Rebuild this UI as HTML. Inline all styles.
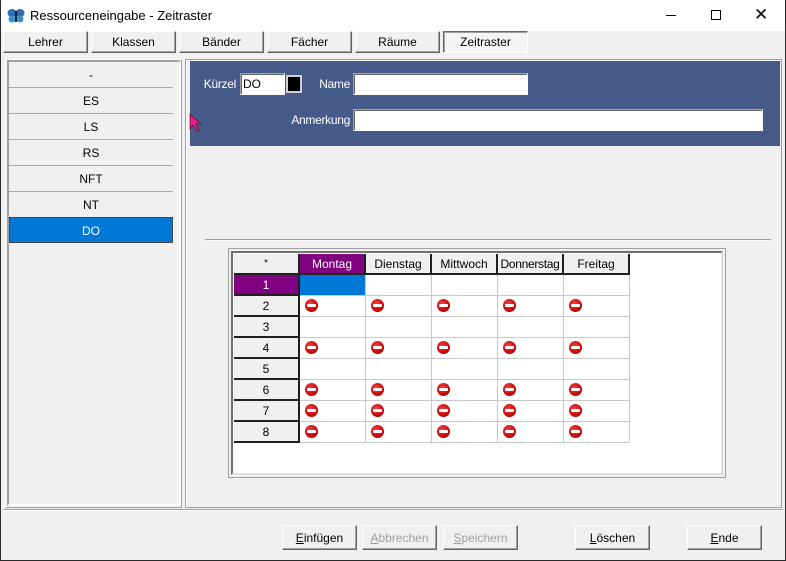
<!DOCTYPE html>
<html><head><meta charset="utf-8"><style>
*{box-sizing:border-box;margin:0;padding:0}
body{width:786px;height:561px;overflow:hidden;background:#f0f0f0;font-family:"Liberation Sans",sans-serif;font-size:12px;color:#000;position:relative}
.a{position:absolute}
.btn{position:absolute;background:#f0f0f0;border:1px solid;border-color:#fff #646464 #646464 #fff;box-shadow:inset -1px -1px 0 #a0a0a0;text-align:center;font-size:12px}
.inp{position:absolute;background:#fff;border:1px solid;border-color:#a0a0a0 #fff #fff #a0a0a0;box-shadow:inset 1px 1px 0 #696969}
.li{position:absolute;left:9px;width:164px;height:26px;border-bottom:1px solid #a8a8a8;text-align:center;line-height:26px;font-size:12px}
.h{position:absolute;background:#f0f0f0;border-right:2px solid #202020;border-bottom:2px solid #202020;text-align:center;line-height:20px;font-size:12px}
.lab{position:absolute;color:#fff;text-align:right;letter-spacing:-0.3px}
.no{position:absolute;width:13px;height:13px;border-radius:50%;background:radial-gradient(circle at 40% 35%,#f04040,#c00000 70%,#900000);}
.no:after{content:"";position:absolute;left:2px;top:5px;width:9px;height:3px;background:#fff;border-radius:1px}
</style></head><body>
<div class="a" style="left:0;top:0;width:786px;height:561px;border:1px solid #2b2b2b;border-top:none"></div>
<div class="a" style="left:1px;top:0;width:784px;height:31px;background:#fff"></div>
<svg class="a" style="left:7px;top:8px" width="18" height="16" viewBox="0 0 18 16"><ellipse cx="5" cy="5" rx="4.5" ry="4" fill="#2c6fb0"/><ellipse cx="13" cy="5" rx="4.5" ry="4" fill="#2c6fb0"/><ellipse cx="5" cy="11" rx="3.5" ry="3.5" fill="#3b8fd0"/><ellipse cx="13" cy="11" rx="3.5" ry="3.5" fill="#3b8fd0"/><rect x="8" y="3" width="2" height="11" fill="#123"/></svg>
<div class="a" style="left:30px;top:8px;font-size:13px">Ressourceneingabe - Zeitraster</div>
<div class="a" style="left:666px;top:15px;width:10px;height:1px;background:#000"></div>
<div class="a" style="left:711px;top:10px;width:10px;height:10px;border:1px solid #000"></div>
<div class="a" style="left:754px;top:6px;font-size:17px;line-height:17px">✕</div>

<div class="btn" style="left:3px;top:31px;width:85px;height:22px;line-height:20px">Lehrer</div>
<div class="btn" style="left:91px;top:31px;width:85px;height:22px;line-height:20px">Klassen</div>
<div class="btn" style="left:179px;top:31px;width:85px;height:22px;line-height:20px">Bänder</div>
<div class="btn" style="left:267px;top:31px;width:85px;height:22px;line-height:20px">Fächer</div>
<div class="btn" style="left:355px;top:31px;width:85px;height:22px;line-height:20px">Räume</div>
<div class="btn" style="left:443px;top:31px;width:85px;height:22px;line-height:20px;border-color:#646464 #fff #fff #646464;box-shadow:inset 1px 1px 0 #a0a0a0;background:#f4f4f4">Zeitraster</div>

<div class="a" style="left:5px;top:59px;width:177px;height:449px;border:1px solid;border-color:#fff #a0a0a0 #a0a0a0 #fff"></div>
<div class="a" style="left:7px;top:60px;width:174px;height:446px;border:2px solid;border-color:#a0a0a0 #fff #fff #a0a0a0"></div>
<div class="li" style="top:62px">-</div>
<div class="li" style="top:88px">ES</div>
<div class="li" style="top:114px">LS</div>
<div class="li" style="top:140px">RS</div>
<div class="li" style="top:166px">NFT</div>
<div class="li" style="top:192px">NT</div>
<div class="li" style="top:217px;background:#0078d7;color:#fff;border:1px dotted #333">DO</div>

<div class="a" style="left:185px;top:59px;width:597px;height:449px;border:1px solid #a0a0a0;box-shadow:inset 1px 1px 0 #fff"></div>
<div class="a" style="left:190px;top:61px;width:590px;height:85px;background:#465a8a"></div>
<div class="lab" style="left:180px;width:56px;top:77px">Kürzel</div>
<div class="inp" style="left:240px;top:73px;width:45px;height:22px;padding:3px 2px">DO</div>
<div class="a" style="left:286px;top:75px;width:16px;height:18px;background:#000;border:2px solid #d0d0d0"></div>
<div class="lab" style="left:300px;width:50px;top:77px">Name</div>
<div class="inp" style="left:353px;top:73px;width:175px;height:22px"></div>
<div class="lab" style="left:280px;width:70px;top:113px">Anmerkung</div>
<div class="inp" style="left:353px;top:109px;width:410px;height:22px"></div>
<svg class="a" style="left:189px;top:113px" width="14" height="20"><path d="M1 1 L1 16 L4 12 L8 18 L10 17 L7 11 L12 11 Z" fill="#e0208a" stroke="#500" stroke-width="0.6"/></svg>

<div class="a" style="left:205px;top:239px;width:566px;height:2px;border-top:1px solid #a0a0a0;border-bottom:1px solid #fff"></div>

<div class="a" style="left:228px;top:248px;width:498px;height:230px;border:1px solid #a0a0a0;background:#f0f0f0"></div>
<div class="a" style="left:231px;top:251px;width:492px;height:224px;border:2px solid;border-color:#707070 #e0e0e0 #e0e0e0 #707070;background:#fff"></div>

<div class="a" style="left:3px;top:509px;width:780px;height:2px;border-top:1px solid #a0a0a0;border-bottom:1px solid #fff"></div>
<div class="btn" style="left:282px;top:525px;width:75px;height:25px;line-height:24px"><u>E</u>infügen</div>
<div class="btn" style="left:362px;top:525px;width:75px;height:25px;line-height:24px;color:#a0a0a0"><u>A</u>bbrechen</div>
<div class="btn" style="left:443px;top:525px;width:75px;height:25px;line-height:24px;color:#a0a0a0"><u>S</u>peichern</div>
<div class="btn" style="left:575px;top:525px;width:75px;height:25px;line-height:24px"><u>L</u>öschen</div>
<div class="btn" style="left:687px;top:525px;width:75px;height:25px;line-height:24px"><u>E</u>nde</div>

<div class="h" style="left:234px;top:254px;width:66px;height:21px;font-size:10px">*</div>
<div class="h" style="left:300px;top:254px;width:66px;height:21px;background:#800080;color:#fff">Montag</div>
<div class="h" style="left:366px;top:254px;width:66px;height:21px">Dienstag</div>
<div class="h" style="left:432px;top:254px;width:66px;height:21px">Mittwoch</div>
<div class="h" style="left:498px;top:254px;width:66px;height:21px;letter-spacing:-0.3px">Donnerstag</div>
<div class="h" style="left:564px;top:254px;width:66px;height:21px">Freitag</div>

<div class="h" style="left:234px;top:275px;width:66px;height:21px;background:#800080;color:#fff">1</div>
<div class="h" style="left:234px;top:296px;width:66px;height:21px">2</div>
<div class="h" style="left:234px;top:317px;width:66px;height:21px">3</div>
<div class="h" style="left:234px;top:338px;width:66px;height:21px">4</div>
<div class="h" style="left:234px;top:359px;width:66px;height:21px">5</div>
<div class="h" style="left:234px;top:380px;width:66px;height:21px">6</div>
<div class="h" style="left:234px;top:401px;width:66px;height:21px">7</div>
<div class="h" style="left:234px;top:422px;width:66px;height:21px">8</div>

<div class="a" style="left:300px;top:275px;width:330px;height:168px;background:repeating-linear-gradient(to right,transparent 0 65px,#c8c8c8 65px 66px),repeating-linear-gradient(to bottom,transparent 0 20px,#c8c8c8 20px 21px)"></div>
<div class="a" style="left:300px;top:275px;width:65px;height:20px;background:#0078d7"></div>

<div class="no" style="left:305px;top:299px"></div><div class="no" style="left:371px;top:299px"></div><div class="no" style="left:437px;top:299px"></div><div class="no" style="left:503px;top:299px"></div><div class="no" style="left:569px;top:299px"></div>
<div class="no" style="left:305px;top:341px"></div><div class="no" style="left:371px;top:341px"></div><div class="no" style="left:437px;top:341px"></div><div class="no" style="left:503px;top:341px"></div><div class="no" style="left:569px;top:341px"></div>
<div class="no" style="left:305px;top:383px"></div><div class="no" style="left:371px;top:383px"></div><div class="no" style="left:437px;top:383px"></div><div class="no" style="left:503px;top:383px"></div><div class="no" style="left:569px;top:383px"></div>
<div class="no" style="left:305px;top:404px"></div><div class="no" style="left:371px;top:404px"></div><div class="no" style="left:437px;top:404px"></div><div class="no" style="left:503px;top:404px"></div><div class="no" style="left:569px;top:404px"></div>
<div class="no" style="left:305px;top:425px"></div><div class="no" style="left:371px;top:425px"></div><div class="no" style="left:437px;top:425px"></div><div class="no" style="left:503px;top:425px"></div><div class="no" style="left:569px;top:425px"></div>
</body></html>
